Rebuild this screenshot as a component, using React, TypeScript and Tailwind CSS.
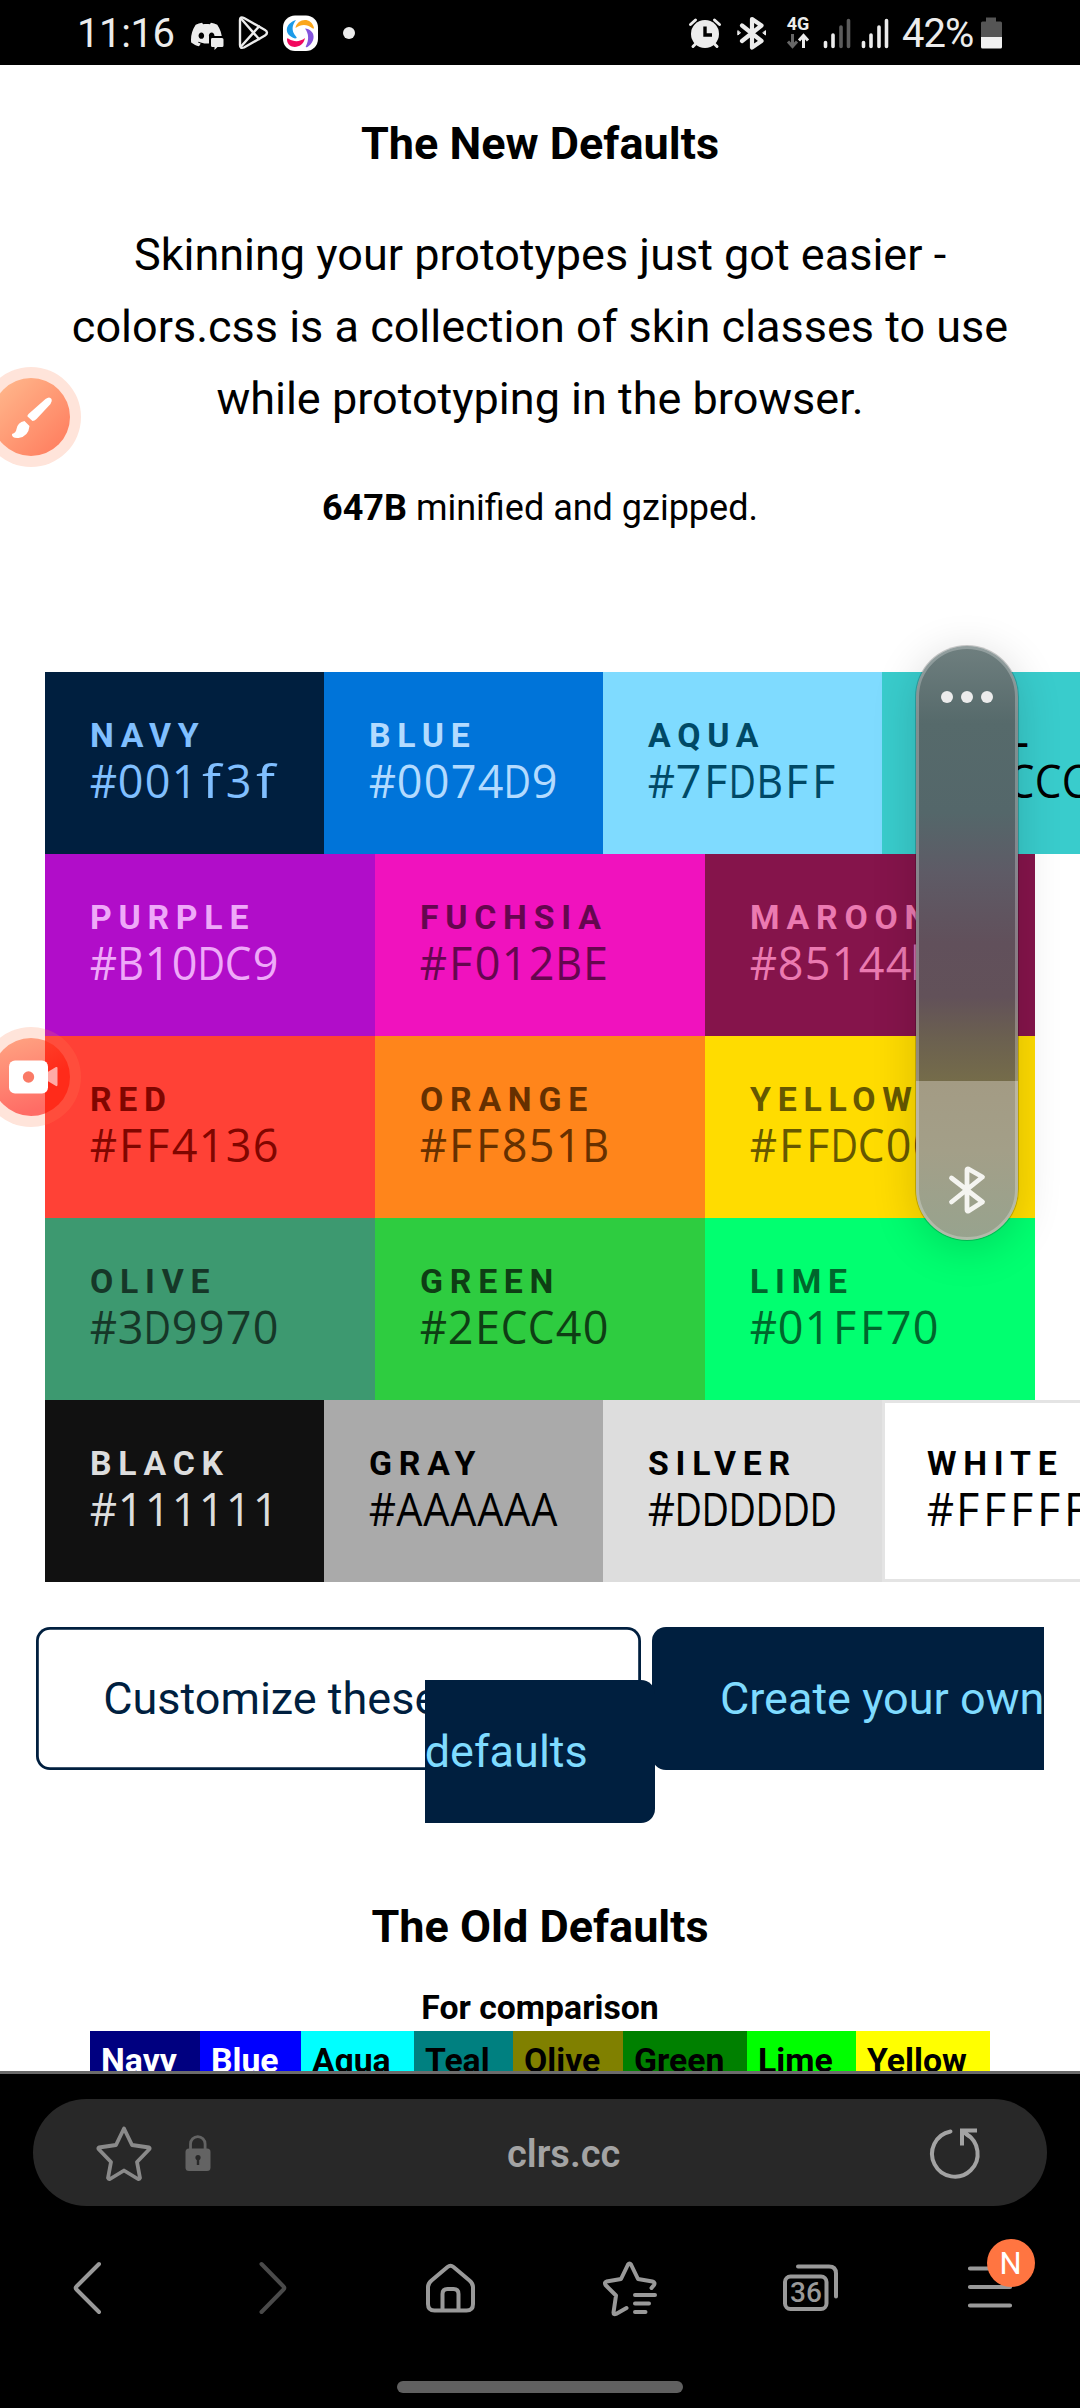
import React from "react";
import { SiDiscord } from "react-icons/si";

type Swatch = { name: string; hex: string; cell: string };

const four = "w-[279px]";
const three = "w-[330px]";

const rows: { width: string; swatches: Swatch[] }[] = [
  {
    width: four,
    swatches: [
      { name: "NAVY", hex: "#001f3f", cell: "bg-[#001f3f] text-[#80bfff]" },
      { name: "BLUE", hex: "#0074D9", cell: "bg-[#0074d9] text-[#b3dbff]" },
      { name: "AQUA", hex: "#7FDBFF", cell: "bg-[#7fdbff] text-[#004966]" },
      { name: "TEAL", hex: "#39CCCC", cell: "bg-[#39cccc] text-black" },
    ],
  },
  {
    width: three,
    swatches: [
      { name: "PURPLE", hex: "#B10DC9", cell: "bg-[#b10dc9] text-[#efa9f9]" },
      { name: "FUCHSIA", hex: "#F012BE", cell: "bg-[#f012be] text-[#65064f]" },
      { name: "MAROON", hex: "#85144b", cell: "bg-[#85144b] text-[#eb7ab1]" },
    ],
  },
  {
    width: three,
    swatches: [
      { name: "RED", hex: "#FF4136", cell: "bg-[#ff4136] text-[#800600]" },
      { name: "ORANGE", hex: "#FF851B", cell: "bg-[#ff851b] text-[#663000]" },
      { name: "YELLOW", hex: "#FFDC00", cell: "bg-[#ffdc00] text-[#665800]" },
    ],
  },
  {
    width: three,
    swatches: [
      { name: "OLIVE", hex: "#3D9970", cell: "bg-[#3d9970] text-[#163728]" },
      { name: "GREEN", hex: "#2ECC40", cell: "bg-[#2ecc40] text-[#0e3e14]" },
      { name: "LIME", hex: "#01FF70", cell: "bg-[#01ff70] text-[#00662c]" },
    ],
  },
  {
    width: four,
    swatches: [
      { name: "BLACK", hex: "#111111", cell: "bg-[#111111] text-[#dddddd]" },
      { name: "GRAY", hex: "#AAAAAA", cell: "bg-[#aaaaaa] text-black" },
      { name: "SILVER", hex: "#DDDDDD", cell: "bg-[#dddddd] text-black" },
      { name: "WHITE", hex: "#FFFFFF", cell: "bg-white text-black shadow-[inset_0_0_0_3px_#e4e4e4]" },
    ],
  },
];

const oldColors = [
  { name: "Navy", cell: "w-[110px] bg-[#000080] text-white" },
  { name: "Blue", cell: "w-[101px] bg-[#0000ff] text-white" },
  { name: "Aqua", cell: "w-[113px] bg-[#00ffff] text-black" },
  { name: "Teal", cell: "w-[99px] bg-[#008080] text-black" },
  { name: "Olive", cell: "w-[110px] bg-[#808000] text-black" },
  { name: "Green", cell: "w-[124px] bg-[#008000] text-black" },
  { name: "Lime", cell: "w-[109px] bg-[#00ff00] text-black" },
  { name: "Yellow", cell: "w-[134px] bg-[#ffff00] text-black" },
];

// Horizontal fit of each letter inside its fixed-width cell.
const fit: Record<string, string> = {
  "#": "scale-x-[0.94]",
  A: "scale-x-[0.92]",
  B: "scale-x-[0.92]",
  C: "scale-x-[0.94]",
  D: "scale-x-[0.84]",
  f: "scale-x-[1.25]",
  b: "-ml-[3px]",
};

function Mono({ text }: { text: string }) {
  return (
    <div className="-mt-px flex font-['Open_Sans',sans-serif] text-[45px] leading-[52px]">
      {text.split("").map((ch, i) => (
        <span key={i} className="flex w-[27px] shrink-0 justify-center">
          <span className={fit[ch] ?? "scale-x-100"}>{ch}</span>
        </span>
      ))}
    </div>
  );
}

function StatusBar() {
  return (
    <header className="flex h-[65px] items-center bg-black text-[#ececec]">
      <span className="ml-[77px] w-[103px] pt-0.5 text-[40px] leading-none tracking-[-0.4px] whitespace-nowrap">11:16</span>
      <svg className="ml-[11px] shrink-0" width="34" height="40" viewBox="191 12 34 40" fill="#ececec">
        <SiDiscord x={191} y={18} size={31} />
        <path d="M209 35h16v17h-16z" fill="#000" />
        <path d="M212 37h10a1.500 1.500 0 0 1 1.500 1.500v6a1.500 1.500 0 0 1-1.500 1.500h-4.500l-3 3v-3h-2.500a1.500 1.500 0 0 1-1-1.500v-6a1.500 1.500 0 0 1 1-1.500z" />
      </svg>
      <svg className="ml-3 shrink-0" width="32" height="36" viewBox="237 15 32 36" fill="none" stroke="#ececec" strokeWidth="2.400" strokeLinejoin="round" strokeLinecap="round">
        <path d="M240 20v25q0 4 4 2.500l21-12q4-3 0-5.500l-21-12q-4-2-4 2z" />
        <path d="M241 18.500l18 20.500M241 46.500l18-20" />
      </svg>
      <svg className="ml-[13px] shrink-0" width="37" height="38" viewBox="282 13 37 38">
        <rect x="283" y="14.500" width="35" height="35.500" rx="12" fill="#fff" />
        <path d="M296 19c-12 4-12 15-1 18.500 2 0 2-1 1-2-5-6-4-11 0-16.500z" fill="#1c9be8" />
        <path d="M295.500 27c2-10 16-11 18.500 0 0 1-1 .5-2 0-5-4-11-4-16.500 0z" fill="#fba61c" />
        <path d="M305 27.500c10 1 12 12 2.500 18.500-2 .5-2 0-1.500-1 3-6 3-12-1-17.500z" fill="#8454dc" />
        <path d="M305 37c-2 11-17 12-18 2 0-2 .500-2 2-1 5 3 11 3 16-1z" fill="#f2085e" />
      </svg>
      <span className="ml-6 size-3 rounded-full bg-[#ececec]" />

      <svg className="ml-[333px] shrink-0" width="34" height="34" viewBox="689 15 34 34" fill="none" stroke="#ececec" strokeLinecap="round">
        <circle cx="706" cy="33" r="14" fill="#ececec" stroke="none" />
        <path d="M706 25.500v8.500h7" stroke="#000" strokeWidth="3.400" strokeLinecap="butt" />
        <path d="M691.500 23.500l5-4.500M720.500 23.500l-5-4.500M694 45.500l4-4M718 45.500l-4-4" strokeWidth="3" />
      </svg>
      <svg className="ml-[14px] shrink-0" width="32" height="36" viewBox="737 14 32 36" fill="none" stroke="#ececec" strokeWidth="4.200" strokeLinejoin="round" strokeLinecap="round">
        <path d="M743 24.500l19.500 15.500-9.500 6.500V18l9.500 6.500-19.500 15.500" />
        <path d="M738.800 30v4l2.500-2zM766.500 30v4l-2.500-2z" fill="#ececec" strokeWidth="1" />
      </svg>
      <div className="ml-[18px] flex w-6 shrink-0 flex-col items-center">
        <span className="text-[18px] leading-[15px] font-bold">4G</span>
        <svg className="mt-0.5" width="24" height="16" viewBox="0 0 24 16" fill="none" strokeWidth="3">
          <path d="M6.500 1v12M2 8.500l4.500 5 4.500-5" stroke="#666" />
          <path d="M17.500 15V3M13 7.500l4.500-5 4.500 5" stroke="#ececec" />
        </svg>
      </div>
      <svg className="ml-[13px] shrink-0" width="28" height="32" viewBox="824 17 28 32" strokeWidth="3.600" strokeLinecap="round">
        <path d="M826.500 42.500v4M834 35v11.500" stroke="#ececec" />
        <path d="M842 27v19.500M849.500 20.500v26" stroke="#5c5c5c" />
      </svg>
      <svg className="ml-[10px] shrink-0" width="28" height="32" viewBox="862 17 28 32" stroke="#ececec" strokeWidth="3.600" strokeLinecap="round">
        <path d="M864.500 42.500v4M872 35v11.500M880 27v19.500M887.500 20.500v26" />
      </svg>
      <span className="ml-[13px] w-[74px] pt-0.5 text-[40px] leading-none tracking-[-1px] whitespace-nowrap">42%</span>
      <svg className="ml-[4px] shrink-0" width="22" height="34" viewBox="981 15 22 34">
        <path d="M987 16.500h10v4h4.500a1.500 1.500 0 0 1 1.500 1.500v14h-21v-14a1.500 1.500 0 0 1 1.500-1.500h3.500z" fill="#555" />
        <path d="M982 36h21v10a1.500 1.500 0 0 1-1.500 1.500h-18a1.500 1.500 0 0 1-1.500-1.500z" fill="#f0f0f0" />
      </svg>
    </header>
  );
}

function Page() {
  return (
    <main className="h-[2006px] overflow-hidden bg-white pt-[52px] text-center text-black">
      <h1 className="text-[45px] leading-[54px] font-bold">The New Defaults</h1>
      <p className="mt-12 text-[45px] leading-[72px]">
        Skinning your prototypes just got easier -
        <br />
        colors.css is a collection of skin classes to use
        <br />
        while prototyping in the browser.
      </p>
      <p className="mt-11 text-[36px] leading-[58px]">
        <b>647B</b> minified and gzipped.
      </p>

      <section className="mt-[135px] ml-[45px] text-left">
        {rows.map((row, i) => (
          <div key={i} className="flex">
            {row.swatches.map((s) => (
              <div key={s.name} className={`h-[182px] shrink-0 pt-11 pl-[45px] ${row.width} ${s.cell}`}>
                <div className="text-[33.75px] leading-[40px] font-bold tracking-[0.2em]">{s.name}</div>
                <Mono text={s.hex} />
              </div>
            ))}
          </div>
        ))}
      </section>

      <div className="mt-[90px] text-[45px] leading-[53px] whitespace-nowrap">
        <a className="rounded-[14px] px-[67.5px] py-[45px] text-[#001f3f] shadow-[inset_0_0_0_2.8px_#001f3f]">
          Customize these colors
        </a>{" "}
        <a className="rounded-[14px] bg-[#001f3f] py-[45px] pr-[67.5px] pl-[67.5px] text-[#7fdbff]">
          Create your own
          <br />
          defaults
        </a>
      </div>

      <h2 className="mt-[122px] text-[45px] leading-[54px] font-bold">The Old Defaults</h2>
      <h3 className="mt-[34px] text-[33.75px] leading-[40px] font-bold">For comparison</h3>
      <div className="mx-[90px] mt-[3px] flex">
        {oldColors.map((c) => (
          <div key={c.name} className={`h-[60px] shrink-0 pt-[10px] pl-[11px] text-left text-[33.75px] leading-[40px] font-bold ${c.cell}`}>
            {c.name}
          </div>
        ))}
      </div>
    </main>
  );
}

function BrowserBar() {
  return (
    <footer className="h-[337px] border-t-[3px] border-[#6b6b6b] bg-black pt-[25px]">
      <div className="mx-[33px] flex h-[107px] items-center rounded-full bg-[#282828]">
        <svg className="ml-[62px] shrink-0" width="58" height="58" viewBox="95 2124 58 58" fill="none" stroke="#8a8a8a" strokeWidth="3.800" strokeLinejoin="round">
          <path d="M124 2128.500l8 16.500 17 2.500q1 .5 .5 1.500l-12.500 13 3 16q-.5 1.500-2 1l-14-8.500-14 8.500q-1.500 .5-2-1l3-16-12.500-13q-.5-1 .5-1.500l17-2.500z" />
        </svg>
        <svg className="ml-8 shrink-0" width="26" height="38" viewBox="185 2134 26 38">
          <path d="M190.500 2150v-6a7.300 7.300 0 0 1 14.600 0v6" fill="none" stroke="#636363" strokeWidth="2.800" />
          <rect x="185.500" y="2148.500" width="25" height="22.500" rx="3.500" fill="#636363" />
          <circle cx="198" cy="2157.500" r="2.600" fill="#282828" />
          <path d="M196.800 2158h2.400v7h-2.400z" fill="#282828" />
        </svg>
        <span className="ml-[296px] w-[118px] pt-0.5 text-[38px] leading-[44px] font-semibold text-[#a3a3a3]">clrs.cc</span>
        <svg className="ml-[301px] shrink-0" width="58" height="58" viewBox="927 2124 58 58" fill="none" stroke="#a3a3a3" strokeWidth="4" strokeLinecap="round">
          <path d="M951.500 2131.500A22.800 22.800 0 1 0 967 2134" />
          <path d="M978 2130.500h-15v15M963.500 2131l8 6" strokeLinecap="butt" />
        </svg>
      </div>

      <nav className="mt-[49px] flex h-[66px] items-center">
        <svg className="ml-[71px] shrink-0" width="34" height="60" viewBox="71 2258 34 60" fill="none" stroke="#999" strokeWidth="4" strokeLinejoin="round" strokeLinecap="round">
          <path d="M99 2264l-22.500 22.500q-1.500 1.500 0 3l22.500 22.500" />
        </svg>
        <svg className="ml-[150px] shrink-0" width="34" height="60" viewBox="255 2258 34 60" fill="none" stroke="#4a4a4a" strokeWidth="4" strokeLinejoin="round" strokeLinecap="round">
          <path d="M261.500 2264l22 22.500q1.500 1.500 0 3l-22 22.500" />
        </svg>
        <svg className="ml-[133px] shrink-0" width="56" height="60" viewBox="422 2258 56 60" fill="none" stroke="#999" strokeWidth="4" strokeLinejoin="round">
          <path d="M447.500 2267q3-2.500 6 0l16 13.500q3.500 3 3.500 6.500v17q0 6.500-6.500 6.500h-32q-6.500 0-6.500-6.500v-17q0-3.500 3.500-6.500z" />
          <path d="M442.500 2310v-16q0-5 5-5h6q5 0 5 5v16" />
        </svg>
        <svg className="ml-[122px] shrink-0" width="62" height="60" viewBox="600 2258 62 60" fill="none" stroke="#999" strokeWidth="4" strokeLinejoin="round" strokeLinecap="round">
          <path d="M626.500 2308l-10.500 6q-2.500 1-2.500-1.500l2.500-17-10.500-10.500q-1.500-2.500 1-3.500l14.500-2.500 7-14.500q1.500-2 3 0l7 14.500 14.500 2.500q3 .8 1.500 3.500l-2.500 3" />
          <path d="M635 2295h20M635 2303.500h14M635 2312h10.500" />
        </svg>
        <div className="relative ml-[118px] h-[60px] w-[62px] shrink-0">
          <svg width="62" height="60" viewBox="780 2258 62 60" fill="none" stroke="#999" strokeWidth="4" strokeLinecap="round">
            <rect x="785" y="2276.500" width="41.500" height="32.500" rx="5.500" />
            <path d="M798 2266.500h31q7 0 7 7v23" />
          </svg>
          <span className="absolute top-[19px] left-[5px] w-[42px] text-center text-[28px] leading-[32px] font-medium text-[#999]">36</span>
        </div>
        <div className="relative ml-[123px] h-[60px] w-[72px] shrink-0">
          <svg width="50" height="60" viewBox="965 2258 50 60" stroke="#999" strokeWidth="4.200" strokeLinecap="round">
            <path d="M970 2268.500h40M970 2287h40M970 2305.500h40" />
          </svg>
          <span className="absolute -top-[19px] left-[21.500px] flex size-12 items-center justify-center rounded-full bg-[#ff7541] pt-px text-[31px] leading-none text-white">
            N
          </span>
        </div>
      </nav>
      <div className="mx-auto mt-[60px] h-3 w-[286px] rounded-full bg-[#606060]" />
    </footer>
  );
}

function VolumePanel() {
  return (
    <div className="absolute top-[646px] left-[916px] flex h-[594px] w-[102px] flex-col items-center overflow-hidden rounded-full bg-[linear-gradient(180deg,#6f7f7f_0%,#566a6b_13%,#54676a_28%,#5e5b66_38%,#61505b_50%,#625159_59%,#6b6050_66%,#756c4a_73.2%,#a39b84_73.200%,#a39f88_85%,#97a38e_100%)] shadow-[0_0_0_1px_rgba(0,0,0,0.2)]">
      <div className="flex gap-[8.500px] pt-[45px]">
        <i className="size-[11.500px] rounded-full bg-[#ececec]" />
        <i className="size-[11.500px] rounded-full bg-[#ececec]" />
        <i className="size-[11.500px] rounded-full bg-[#ececec]" />
      </div>
      <svg className="mt-[461px] shrink-0" width="40" height="52" viewBox="947 1164 40 52" fill="none" stroke="#f4f4f0" strokeWidth="4.800" strokeLinejoin="round" strokeLinecap="round">
        <path d="M951.500 1178l31 24-14 9q-1.500 .5-1.500-1v-40q0-1.500 1.500-1l14 8-31 25" />
      </svg>
      <div className="absolute inset-0 rounded-full border-[3px] border-white/25" />
    </div>
  );
}

function FloatingButtons() {
  return (
    <>
      <div className="absolute top-[367px] left-0 h-[100px] w-[82px] overflow-hidden">
        <svg width="82" height="100" viewBox="0 0 82 100">
          <defs>
            <linearGradient id="brush" x1="0" y1="0" x2="1" y2="1">
              <stop offset="0.100" stopColor="#ffb58a" />
              <stop offset="0.900" stopColor="#ff7f60" />
            </linearGradient>
          </defs>
          <circle cx="31" cy="50" r="50" fill="#ffe4da" />
          <circle cx="31" cy="50" r="39" fill="url(#brush)" />
          <path d="M45.500 32q4-3 6 0 1 2-1 5l-14 15q-2 2-4 2l-5-4.500q-.5-1 1-2.500z" fill="#fff" />
          <path d="M24.500 54l5 5q-1 10.500-11 12-7 .5-6.500-4 4-1 4.500-5 1-6.500 8-8z" fill="#fff" />
        </svg>
      </div>
      <div className="absolute top-[1027px] left-0 h-[100px] w-[82px] overflow-hidden">
        <svg width="82" height="100" viewBox="0 0 82 100">
          <defs>
            <linearGradient id="camLight" x1="0" y1="0" x2="0.300" y2="1">
              <stop offset="0.100" stopColor="#ffa080" />
              <stop offset="1" stopColor="#ff6c65" />
            </linearGradient>
            <linearGradient id="camDark" x1="0" y1="0" x2="0.600" y2="1">
              <stop offset="0" stopColor="#ff4e33" />
              <stop offset="0.700" stopColor="#ff2b1a" />
            </linearGradient>
            <clipPath id="outside"><rect width="45" height="100" /></clipPath>
            <clipPath id="inside"><rect x="45" width="37" height="100" /></clipPath>
          </defs>
          <circle cx="31" cy="50" r="50" fill="#ffe4da" clipPath="url(#outside)" />
          <circle cx="31" cy="50" r="50" fill="#ff7a50" fillOpacity="0.220" clipPath="url(#inside)" />
          <circle cx="31" cy="50" r="39" fill="url(#camLight)" clipPath="url(#outside)" />
          <circle cx="31" cy="50" r="39" fill="url(#camDark)" clipPath="url(#inside)" />
          <path d="M46 46l10-6q1.500-.5 1.500 1v17q0 1.500-1.500 1l-10-6z" fill="#ffaaa5" />
          <rect x="9" y="33.500" width="39" height="33" rx="6" fill="#fff" />
          <circle cx="28.500" cy="50" r="5.700" fill="#fa7a66" />
        </svg>
      </div>
    </>
  );
}

export default function App() {
  return (
    <div className="relative h-[2408px] w-[1080px] overflow-hidden bg-white font-['Roboto',sans-serif]">
      <StatusBar />
      <Page />
      <BrowserBar />
      <div className="absolute top-[646px] left-[916px] h-[594px] w-[102px] rounded-full shadow-[0_8px_45px_rgba(0,0,0,0.16)]" />
      <VolumePanel />
      <FloatingButtons />
    </div>
  );
}
